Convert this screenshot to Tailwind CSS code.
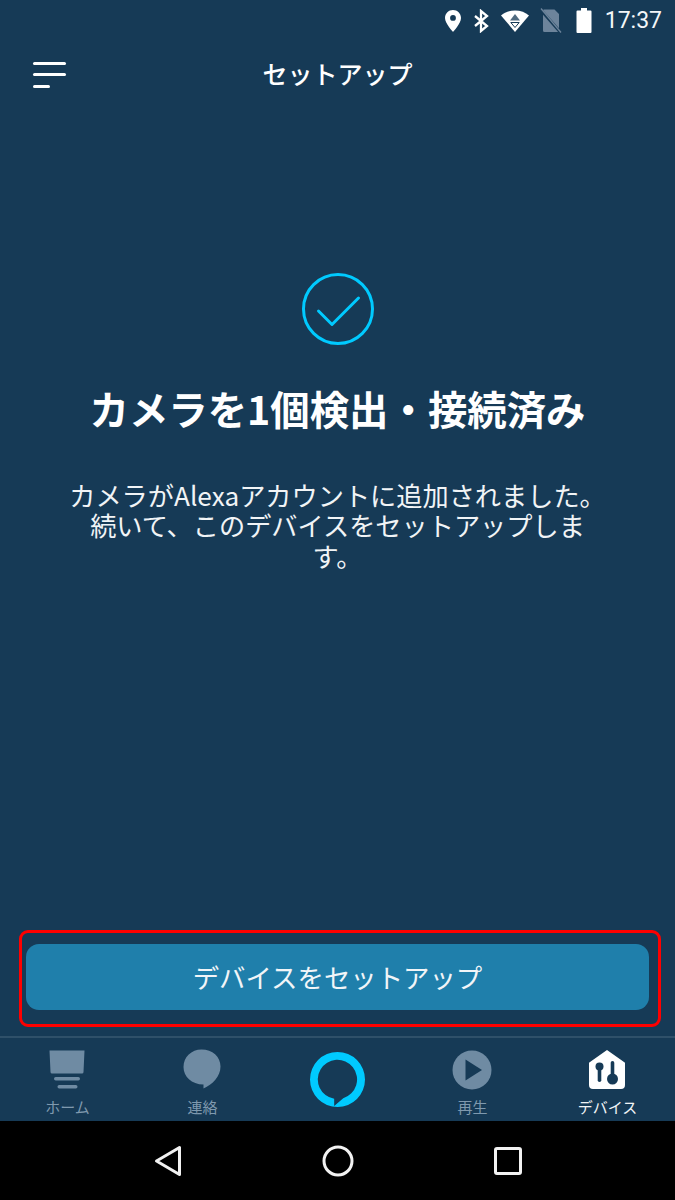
<!DOCTYPE html>
<html lang="ja">
<head>
<meta charset="utf-8">
<script src="https://cdn.jsdelivr.net/npm/@tailwindcss/browser@4"></script>
</head>
<body class="m-0">
<div class="w-[675px] h-[1200px] flex flex-col bg-[#163a56] text-white overflow-hidden font-['Noto_Sans_CJK_JP','Noto_Sans',sans-serif]">
  <!-- status bar -->
  <div class="h-[37px] flex items-center justify-end pr-[13px] pt-[4px]">
    <svg class="w-[18px] h-[24px] mr-[11px]" viewBox="0 0 18 24"><path fill="#fff" fill-rule="evenodd" d="M9 1C4.600 1 1 4.500 1 9c0 5.500 8 14 8 14s8-8.500 8-14c0-4.500-3.600-8-8-8zm0 10.800a2.900 2.900 0 1 1 0-5.800 2.900 2.900 0 0 1 0 5.800z"/></svg>
    <svg class="w-[16px] h-[24px] mr-[11px]" viewBox="0 0 16 24"><path fill="none" stroke="#fff" stroke-width="2.300" d="M2 7l12 10-6 5V2l6 5L2 17"/></svg>
    <svg class="w-[30px] h-[24px] mr-[10px]" viewBox="0 0 30 24"><path fill="#fff" d="M15 1.500C9.500 1.500 4.500 3.400 1 6.500L15 23 29 6.500C25.500 3.400 20.500 1.500 15 1.500z"/><path fill="#163a56" fill-opacity="0.75" d="M15 5l-5 6.500h10z"/><path fill="none" stroke="#163a56" stroke-width="1" d="M10.800 13.500h8.400L15 18.500z"/></svg>
    <svg class="w-[22px] h-[26px] mr-[14px]" viewBox="0 0 22 26"><path fill="#6d849b" d="M3.500 1.500h11l4.500 4.500v16.500a1.500 1.500 0 0 1-1.500 1.500h-13a1.500 1.500 0 0 1-1.500-1.500v-20a1 1 0 0 1 .500-.500z"/><path stroke="#163a56" stroke-width="3" d="M0 1l21 24"/><path stroke="#6d849b" stroke-width="1.300" d="M1 0.500l20 24"/></svg>
    <svg class="w-[16px] h-[25px] mr-[13px]" viewBox="0 0 16 25"><path fill="#fff" d="M5 0h6v2.500h3.500a1 1 0 0 1 1 1V24a1 1 0 0 1-1 1h-13a1 1 0 0 1-1-1V3.500a1 1 0 0 1 1-1H5z"/></svg>
    <span class="font-['Roboto',sans-serif] text-[23px] leading-[26px] text-[#f4f6f8]">17:37</span>
  </div>
  <!-- header -->
  <div class="h-[75px] relative flex items-center justify-center">
    <div class="absolute left-[33px] top-[25px] flex flex-col items-start">
      <div class="w-[33px] h-[3px] rounded-full bg-white"></div>
      <div class="w-[33px] h-[3px] rounded-full bg-white mt-[8px]"></div>
      <div class="w-[17px] h-[3px] rounded-full bg-white mt-[9px]"></div>
    </div>
    <span class="text-[25px] leading-[30px] font-medium -mt-[4px]">セットアップ</span>
  </div>
  <!-- content -->
  <div class="flex-1 flex flex-col items-center">
    <svg class="w-[74px] h-[74px] mt-[160px]" viewBox="0 0 74 74"><circle cx="37" cy="37" r="34.500" fill="none" stroke="#00caff" stroke-width="3"/><path d="M17.500 39L31 52.500 57.500 26" fill="none" stroke="#00caff" stroke-width="3" stroke-linecap="round" stroke-linejoin="round"/></svg>
    <h1 class="mt-[34px] text-[39.400px] leading-[56px] font-bold whitespace-nowrap">カメラを1個検出・接続済み</h1>
    <p class="mt-[43.500px] w-[560px] text-center text-[26.200px] leading-[30.500px] text-[#f1f4f6]">カメラがAlexaアカウントに追加されました。<br>続いて、このデバイスをセットアップしま<br>す。</p>
  </div>
  <!-- button -->
  <div class="ml-[19px] mr-[14px] mb-[9px] h-[97px] border-[3px] border-[#ff0000] rounded-[9px] pl-[4px] pr-[9px] pt-[11px] pb-[14px]">
    <div class="h-full bg-[#1f7fab] rounded-[13px] flex items-center justify-center text-[26.400px] text-[#f1f5f8]">デバイスをセットアップ</div>
  </div>
  <!-- tab bar -->
  <div class="h-[85px] border-t-2 border-[#2f5069] flex">
    <div class="w-[135px] flex flex-col items-center">
      <svg class="w-[38px] h-[42px] mt-[11px] mr-[2px]" viewBox="0 0 38 42"><path fill="#6f8ba3" d="M1.500 1.500h35l-1 21.500a1.500 1.500 0 0 1-1.500 1.500H4a1.500 1.500 0 0 1-1.500-1.500z"/><rect x="6" y="28" width="26" height="3.500" rx="1.700" fill="#6f8ba3"/><rect x="9.500" y="36" width="20" height="3.500" rx="1.700" fill="#6f8ba3"/></svg>
      <span class="text-[15px] leading-[20px] mt-[6px] text-[#7f99ae]">ホーム</span>
    </div>
    <div class="w-[135px] flex flex-col items-center">
      <svg class="w-[38px] h-[42px] mt-[11px] mr-[1px]" viewBox="0 0 38 42"><path fill="#6f8ba3" d="M18.500 0.500C8.500 0.500 0.500 8 0.500 18c0 9.500 8 17.500 20 17.500v4c9-4 17-12 17-22 0-10-8-17-19-17z"/></svg>
      <span class="text-[15px] leading-[20px] mt-[6px] text-[#7f99ae]">連絡</span>
    </div>
    <div class="w-[135px] flex justify-center">
      <svg class="w-[55px] h-[55px] mt-[14px]" viewBox="0 0 54.600 54.600"><path fill="#00caff" fill-rule="evenodd" d="M27.300 0a27.300 27.300 0 1 1 0 54.600a27.300 27.300 0 1 1 0-54.600zM24 46.500V53.500L33 45.900A19.500 19.500 0 1 0 24 46.500z"/></svg>
    </div>
    <div class="w-[135px] flex flex-col items-center">
      <svg class="w-[40px] h-[40px] mt-[12px] mr-[1px]" viewBox="0 0 40 40"><circle cx="20" cy="20" r="19.500" fill="#6f8ba3"/><path fill="#163a56" d="M13.500 9.500L30 20 13.500 30.500z"/></svg>
      <span class="text-[15px] leading-[20px] mt-[7px] text-[#7f99ae]">再生</span>
    </div>
    <div class="w-[135px] flex flex-col items-center">
      <svg class="w-[38px] h-[42px] mt-[11px] mr-[2px]" viewBox="0 0 38 42"><path fill="#fff" d="M19 1L36 13a1.500 1.500 0 0 1 1 1.500V36a4 4 0 0 1-4 4H5a4 4 0 0 1-4-4V14.500A1.500 1.500 0 0 1 2 13z"/><circle cx="11.500" cy="17.500" r="4" fill="#163a56"/><rect x="9.700" y="19" width="3.600" height="14" rx="1.800" fill="#163a56"/><rect x="22.700" y="12" width="3.600" height="16" rx="1.800" fill="#163a56"/><circle cx="24.500" cy="30" r="5.500" fill="#163a56"/></svg>
      <span class="text-[15px] leading-[20px] mt-[6px] text-[#f1f4f6]">デバイス</span>
    </div>
  </div>
  <!-- nav bar -->
  <div class="h-[79px] bg-black flex items-center">
    <div class="w-full flex items-center justify-center gap-[140px]">
      <svg class="w-[28px] h-[32px]" viewBox="0 0 28 32"><path d="M25.500 2.500v27L2.500 16z" fill="none" stroke="#f2f2f2" stroke-width="3" stroke-linejoin="round"/></svg>
      <svg class="w-[32px] h-[32px]" viewBox="0 0 32 32"><circle cx="16" cy="16" r="14" fill="none" stroke="#f2f2f2" stroke-width="3"/></svg>
      <svg class="w-[28px] h-[28px]" viewBox="0 0 28 28"><rect x="1.500" y="1.500" width="25" height="25" rx="1.500" fill="none" stroke="#f2f2f2" stroke-width="3"/></svg>
    </div>
  </div>
</div>
</body>
</html>
